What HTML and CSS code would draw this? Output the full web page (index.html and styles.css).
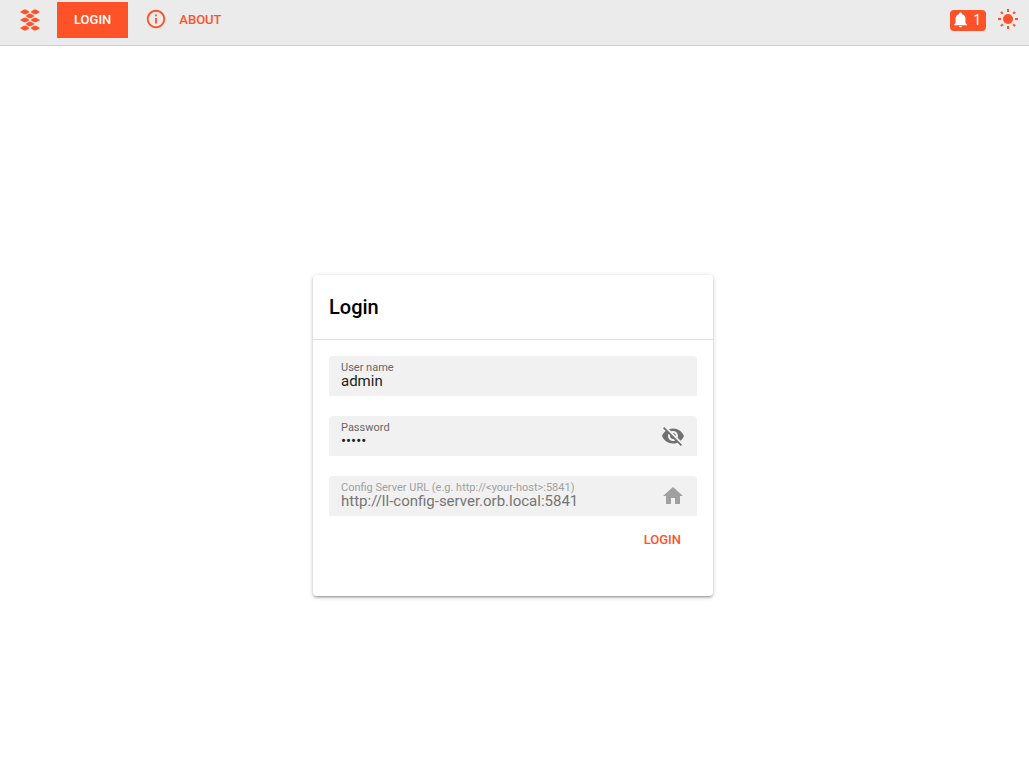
FILE: index.html
```html
<!DOCTYPE html>
<html lang="en">
<head>
<meta charset="utf-8">
<meta name="viewport" content="width=device-width, initial-scale=1">
<title>Login</title>
<link rel="stylesheet" href="styles.css">
</head>
<body>
<header class="toolbar">
  <svg class="logo" viewBox="0 0 24 24" aria-hidden="true">
    <path d="M2 4l4-2.500h2L11.500 4 8 6.300H6zM12.500 4L16 1.500h2L22 4l-4 2.300h-2zM7.500 8L11 5.700h2L16.500 8 13 10.300h-2zM2 12l4-2.300h2l3.500 2.300L8 14.300H6zM12.500 12L16 9.700h2l4 2.300-4 2.300h-2zM7.500 16l3.500-2.300h2l3.500 2.300-3.500 2.300h-2zM2 20l4-2.300h2l3.500 2.300L8 22.500H6zM12.500 20l3.500-2.300h2l4 2.300-4 2.500h-2z"/>
  </svg>
  <nav class="nav">
    <a class="tab tab-active" href="#login">LOGIN</a>
    <a class="tab" href="#about">
      <svg class="tab-icon" viewBox="0 0 24 24" aria-hidden="true"><path d="M11 7h2v2h-2zm0 4h2v6h-2zm1-9C6.480 2 2 6.480 2 12s4.480 10 10 10 10-4.480 10-10S17.520 2 12 2zm0 18c-4.410 0-8-3.590-8-8s3.590-8 8-8 8 3.590 8 8-3.590 8-8 8z"/></svg>
      ABOUT
    </a>
  </nav>
  <button class="badge" type="button" aria-label="1 notification">
    <svg class="badge-icon" viewBox="0 0 24 24" aria-hidden="true"><path d="M21 19v1H3v-1l2-2v-6c0-3.100 2.030-5.830 5-6.710V4a2 2 0 0 1 4 0v.29c2.970.88 5 3.610 5 6.710v6l2 2m-7 2a2 2 0 0 1-4 0"/></svg>
    <span>1</span>
  </button>
  <button class="theme" type="button" aria-label="Toggle theme">
    <svg class="theme-icon" viewBox="0 0 24 24" aria-hidden="true">
      <circle cx="12" cy="12" r="5"/>
      <path class="rays" d="M12 2v3M12 19v3M2 12h3M19 12h3M4.900 4.900l1.900 1.900M17.200 17.200l1.900 1.900M4.900 19.100l1.900-1.900M17.200 6.800l1.900-1.900"/>
    </svg>
  </button>
</header>
<main class="page">
  <form class="card">
    <h1 class="title">Login</h1>
    <div class="body">
      <div class="field">
        <div class="text">
          <label class="label" for="user">User name</label>
          <input class="input" id="user" type="text" value="admin">
        </div>
      </div>
      <div class="field">
        <div class="text">
          <label class="label" for="password">Password</label>
          <input class="input" id="password" type="password" value="admin">
        </div>
        <button class="field-button" type="button" aria-label="Show password">
          <svg class="field-icon" viewBox="0 0 24 24" aria-hidden="true"><path d="M12 7c2.760 0 5 2.240 5 5 0 .65-.13 1.260-.36 1.830l2.920 2.920c1.510-1.260 2.700-2.890 3.430-4.750-1.730-4.390-6-7.500-11-7.500-1.400 0-2.740.25-3.980.7l2.160 2.160C10.740 7.130 11.350 7 12 7zM2 4.270l2.280 2.280.46.46C3.080 8.300 1.780 10.020 1 12c1.730 4.390 6 7.500 11 7.500 1.550 0 3.030-.3 4.380-.84l.42.42L19.730 22 21 20.730 3.270 3 2 4.270zM7.530 9.800l1.550 1.550c-.05.21-.08.43-.08.65 0 1.660 1.340 3 3 3 .22 0 .44-.03.65-.08l1.550 1.550c-.67.33-1.410.53-2.200.53-2.760 0-5-2.240-5-5 0-.79.2-1.530.53-2.200zm4.310-.78l3.150 3.150.02-.16c0-1.660-1.340-3-3-3l-.17.01z"/></svg>
        </button>
      </div>
      <div class="field field-disabled">
        <div class="text">
          <label class="label" for="server">Config Server URL (e.g. http://&lt;your-host&gt;:5841)</label>
          <input class="input" id="server" type="text" value="http://ll-config-server.orb.local:5841" disabled>
        </div>
        <button class="field-button" type="button" aria-label="Default server" disabled>
          <svg class="field-icon" viewBox="0 0 24 24" aria-hidden="true"><path d="M10 20v-6h4v6h5v-8h3L12 3 2 12h3v8z"/></svg>
        </button>
      </div>
      <button class="submit" type="submit">LOGIN</button>
    </div>
  </form>
</main>
</body>
</html>
```
FILE: styles.css
```css
* {
  box-sizing: border-box;
}

body {
  margin: 0;
  min-height: 100vh;
  display: flex;
  flex-direction: column;
  background: #fff;
  color: #000;
  font-family: Roboto, "Liberation Sans", sans-serif;
  font-size: 15px;
}

button,
input {
  margin: 0;
  padding: 0;
  border: 0;
  background: none;
  font: inherit;
}

svg {
  display: block;
  flex: none;
  fill: currentColor;
}

.toolbar {
  display: flex;
  align-items: center;
  padding: 2px 9px 7px 18px;
  border-bottom: 1px solid #ccc;
  background: #ebebeb;
  color: #ff5229;
}

.logo {
  width: 24px;
  height: 24px;
}

.nav {
  display: flex;
  flex: 1;
  margin-left: 15px;
}

.tab {
  display: flex;
  align-items: center;
  gap: 12px;
  height: 36px;
  padding: 0 17px 2px;
  color: #ff5229;
  font-size: 13px;
  font-weight: 500;
  text-decoration: none;
}

.tab-active {
  background: #ff5229;
  color: #fff;
}

.tab-icon {
  width: 22px;
  height: 22px;
}

.badge {
  display: flex;
  align-items: center;
  gap: 4px;
  height: 21px;
  padding: 0 5px 1px 2px;
  border-radius: 4px;
  background: #ff5229;
  color: #fff;
  font-size: 14px;
}

.badge-icon {
  width: 17px;
  height: 17px;
}

.theme {
  margin-left: 10px;
  padding-bottom: 2px;
  color: #ff5229;
}

.theme-icon {
  width: 24px;
  height: 24px;
}

.rays {
  fill: none;
  stroke: currentColor;
  stroke-width: 2;
}

.page {
  flex: 1;
  display: flex;
  align-items: center;
  justify-content: center;
  padding: 41px 3px 0 0;
}

.card {
  width: 400px;
  max-width: 100%;
  border-radius: 4px;
  background: #fff;
  box-shadow: 0 1px 5px rgba(0, 0, 0, 0.2), 0 2px 2px rgba(0, 0, 0, 0.14), 0 3px 1px -2px rgba(0, 0, 0, 0.12);
}

.title {
  margin: 0;
  padding: 16px;
  border-bottom: 1px solid #e0e0e0;
  font-size: 20px;
  font-weight: 500;
  line-height: 32px;
}

.body {
  display: flex;
  flex-direction: column;
  gap: 20px;
  padding: 16px 16px 39px;
}

.field {
  display: flex;
  align-items: center;
  height: 40px;
  padding: 0 12px;
  border-radius: 4px 4px 0 0;
  background: #f1f1f1;
}

.text {
  display: flex;
  flex: 1;
  flex-direction: column;
  min-width: 0;
}

.label {
  color: #666;
  font-size: 11px;
  line-height: 12px;
}

.input {
  width: 100%;
  height: 18px;
  margin-top: -2px;
  color: #212121;
  outline: 0;
}

.field-button {
  color: #707070;
}

.field-icon {
  width: 24px;
  height: 24px;
}

.field-disabled .label,
.field-disabled .field-button {
  color: #a0a0a0;
}

.field-disabled .input {
  color: #757575;
}

.submit {
  align-self: flex-end;
  height: 36px;
  margin-top: -15px;
  padding: 0 16px;
  color: #ff5229;
  font-size: 13px;
  font-weight: 500;
}
```
